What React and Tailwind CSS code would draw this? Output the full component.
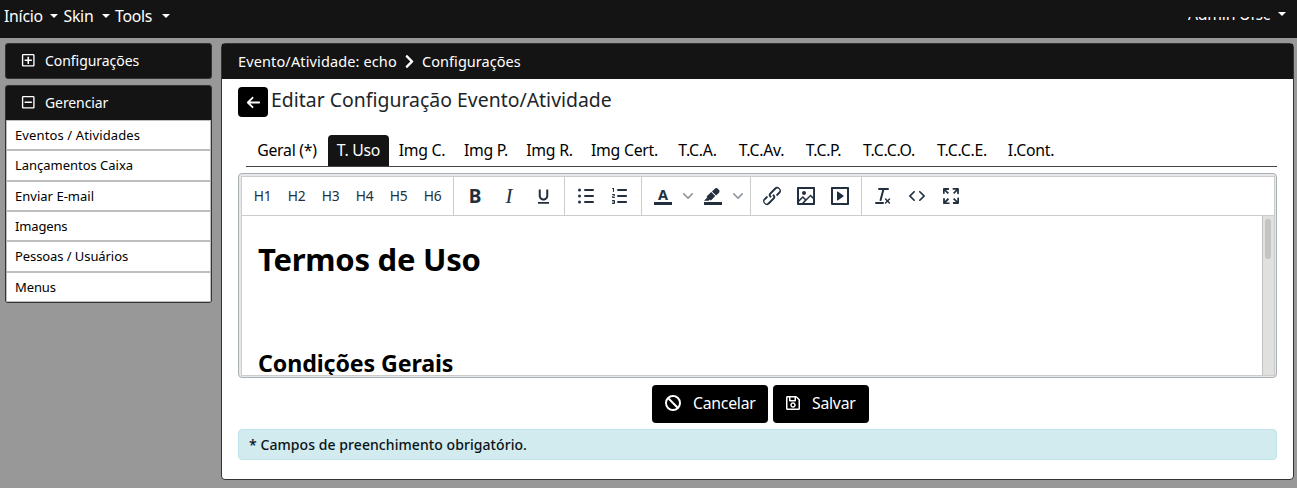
import React from "react";
import { FaRegPlusSquare, FaRegMinusSquare, FaRegSave, FaChevronRight } from "react-icons/fa";
import { FaArrowLeft, FaBan } from "react-icons/fa6";
import { MdFormatUnderlined } from "react-icons/md";

const ICONS = {
  ordered:
    "M10 17h8c.6 0 1 .4 1 1s-.4 1-1 1h-8a1 1 0 010-2zm0-6h8c.6 0 1 .4 1 1s-.4 1-1 1h-8a1 1 0 010-2zm0-6h8c.6 0 1 .4 1 1s-.4 1-1 1h-8a1 1 0 110-2zM6 4v3.5c0 .3-.2.5-.5.5a.5.5 0 01-.5-.5V5h-.5a.5.5 0 010-1H6zm-1 8.8l.2.2h1.3c.3 0 .5.2.5.5s-.2.5-.5.5H4.9a1 1 0 01-.9-1V13c0-.4.3-.8.6-1l1.2-.4.2-.3a.2.2 0 00-.2-.2H4.5a.5.5 0 01-.5-.5c0-.3.2-.5.5-.5h1.6c.5 0 .9.4.9 1v.1c0 .4-.3.8-.6 1l-1.2.4-.2.3zM7 17v2c0 .6-.4 1-1 1H4.5a.5.5 0 010-1h1.2c.2 0 .3-.1.3-.3 0-.2-.1-.3-.3-.3H4.4a.4.4 0 110-.8h1.3c.2 0 .3-.1.3-.3 0-.2-.1-.3-.3-.3H4.5a.5.5 0 110-1H6c.6 0 1 .4 1 1z",
  link: "M6.2 12.3a1 1 0 011.4 1.4l-2.1 2a2 2 0 102.7 2.8l4.8-4.8a1 1 0 000-1.4 1 1 0 111.4-1.3 2.9 2.9 0 010 4L9.6 20a3.9 3.9 0 01-5.5-5.5l2-2zm11.6-.6a1 1 0 01-1.4-1.4l2-2a2 2 0 10-2.6-2.8L11 10.3a1 1 0 000 1.4A1 1 0 119.6 13a2.9 2.9 0 010-4L14.4 4a3.9 3.9 0 015.5 5.5l-2 2z",
  image:
    "M5 15.7l3.3-3.2c.3-.3.7-.3 1 0L12 15l4.1-4c.3-.4.8-.4 1 0l2 1.9V5H5v10.7zM5 18V19h3l2.8-2.9-2-2L5 17.9zm14-3l-2.5-2.4-6.4 6.5H19v-4zM4 3h16c.6 0 1 .4 1 1v16c0 .6-.4 1-1 1H4a1 1 0 01-1-1V4c0-.6.4-1 1-1zm6 8a2 2 0 100-4 2 2 0 000 4z",
  media:
    "M4 3h16c.6 0 1 .4 1 1v16c0 .6-.4 1-1 1H4a1 1 0 01-1-1V4c0-.6.4-1 1-1zm1 2v14h14V5H5zm4.8 2.6l5.6 4a.5.5 0 010 .8l-5.6 4A.5.5 0 019 16V8a.5.5 0 01.8-.4z",
  clear:
    "M13.2 6a1 1 0 010 .2l-2.6 10a1 1 0 01-1 .8h-.2a.8.8 0 01-.8-1l2.6-10H8a1 1 0 110-2h9a1 1 0 010 2h-3.8zM5 18h7a1 1 0 010 2H5a1 1 0 010-2zm13 1.5L16.5 18 15 19.5a.7.7 0 01-1-1l1.5-1.5-1.5-1.5a.7.7 0 011-1l1.5 1.5 1.5-1.5a.7.7 0 011 1L17.5 17l1.5 1.5a.7.7 0 01-1 1z",
  code: "M9.8 15.7c.3.3.3.8 0 1-.3.4-.9.4-1.2 0l-4.4-4.1a.8.8 0 010-1.2l4.4-4.2c.3-.3.9-.3 1.2 0 .3.3.3.8 0 1.1L6 12l3.8 3.7zM14.2 15.7c-.3.3-.3.8 0 1 .4.4.9.4 1.2 0l4.4-4.1c.3-.3.3-.9 0-1.2l-4.4-4.2a.8.8 0 00-1.2 0c-.3.3-.3.8 0 1.1L18 12l-3.8 3.7z",
  full: "M15.3 10l-1.2-1.3 2.9-3h-2.3a.9.9 0 110-1.7H19c.5 0 .9.4.9.9v4.4a.9.9 0 11-1.8 0V7l-2.9 3zm0 4l3 3v-2.3a.9.9 0 111.7 0V19c0 .5-.4.9-.9.9h-4.4a.9.9 0 110-1.8H17l-3-2.9 1.3-1.2zM10 15.4l-2.9 3h2.3a.9.9 0 110 1.7H5a.9.9 0 01-.9-.9v-4.4a.9.9 0 111.8 0V17l2.9-3 1.2 1.3zM8.7 10L5.7 7v2.3a.9.9 0 01-1.7 0V5c0-.5.4-.9.9-.9h4.4a.9.9 0 010 1.8H7l3 2.9-1.3 1.2z",
};

function Icon({ name }) {
  return (
    <svg viewBox="0 0 24 24" className="size-6 fill-[#222f3e]" fillRule="evenodd">
      <path d={ICONS[name]} />
    </svg>
  );
}

function Tool({ children }) {
  return <span className="flex h-[34px] w-[34px] shrink-0 items-center justify-center">{children}</span>;
}

function Group({ className, children }) {
  return <div className={`flex shrink-0 items-center border-[#ccc] ${className}`}>{children}</div>;
}

function Chevron() {
  return (
    <span className="flex w-4 justify-center">
      <svg viewBox="0 0 10 10" className="size-[10px] fill-[#222f3e]/50">
        <path d="M8.7 2.2c.3-.3.8-.3 1 0 .4.4.4.9 0 1.2L5.7 7.8c-.3.3-.9.3-1.2 0L.2 3.4a.8.8 0 010-1.2c.3-.3.8-.3 1.1 0L5 6l3.7-3.8z" />
      </svg>
    </span>
  );
}

function Caret() {
  return <span className="block h-0 w-0 border-x-4 border-t-4 border-x-transparent border-t-white" />;
}

const MENU = [
  ["Início", "w-[59.5px] pr-[5.5px]"],
  ["Skin", "w-[51.5px] pr-[5px]"],
  ["Tools", "w-[55px]"],
];

const LINKS = [
  ["Eventos / Atividades", "tracking-[0.12px]"],
  ["Lançamentos Caixa", "tracking-[-0.02px]"],
  ["Enviar E-mail", "tracking-[0.02px]"],
  ["Imagens", "tracking-[-0.15px]"],
  ["Pessoas / Usuários", "tracking-[-0.08px]"],
  ["Menus", "tracking-[-0.1px]"],
];

const TABS = [
  ["Geral (*)", "w-[82px]"],
  ["T. Uso", "w-[61px] rounded-t bg-[#141414] text-white"],
  ["Img C.", "w-[66px]"],
  ["Img P.", "w-[62px]"],
  ["Img R.", "w-[65px]"],
  ["Img Cert.", "w-[85px]"],
  ["T.C.A.", "w-[61px]"],
  ["T.C.Av.", "w-[67px]"],
  ["T.C.P.", "w-[57px]"],
  ["T.C.C.O.", "w-[74px]"],
  ["T.C.C.E.", "w-[72px]"],
  ["I.Cont.", "w-[66px]"],
];

export default function App() {
  return (
    <div className="flex h-[488px] w-[1297px] flex-col overflow-hidden bg-[#989898] font-['Noto_Sans',sans-serif] text-black">
      <nav className="flex h-[38px] shrink-0 justify-between bg-[#141414] pl-1 text-[15.8px] tracking-[-0.25px] text-white">
        <div className="flex h-8 items-center">
          {MENU.map(([label, cls]) => (
            <div key={label} className={`flex items-center justify-between ${cls}`}>
              <span className="pt-0.5">{label}</span>
              <Caret />
            </div>
          ))}
        </div>
        <div className="flex items-start pr-[11px]">
          <div className="mt-[17px] flex h-1 w-[83px] items-end overflow-hidden">
            <span className="-mb-[5px] whitespace-nowrap leading-6">Admin Ufsc</span>
          </div>
          <span className="ml-[7px] mt-3"><Caret /></span>
        </div>
      </nav>

      <div className="flex items-start pl-[5px] pt-[5px]">
        <aside className="flex w-[207px] shrink-0 flex-col gap-1.5 text-[14px]">
          <div className="flex h-9 items-center rounded-[3px] border border-[#333] bg-[#141414] pb-px pl-[15px] text-white">
            <FaRegPlusSquare className="size-[14.5px]" />
            <span className="ml-[9.5px] tracking-[-0.05px]">Configurações</span>
          </div>
          <div className="rounded-[3px] border border-[#333] bg-[#141414]">
            <div className="flex h-[34px] items-center pb-px pl-[15px] text-white">
              <FaRegMinusSquare className="size-[14.5px]" />
              <span className="ml-[9.5px] tracking-[-0.1px]">Gerenciar</span>
            </div>
            <div className="flex h-[182px] flex-col overflow-hidden rounded-b-[2px] text-[13px]">
              {LINKS.map(([label, cls]) => (
                <a key={label} className={`flex flex-1 items-center border border-[#bdbdbd] bg-white pl-2 pt-px ${cls}`}>
                  {label}
                </a>
              ))}
            </div>
          </div>
        </aside>

        <main className="ml-[9px] flex h-[437px] w-[1073px] shrink-0 flex-col rounded-[4px] border border-[#333] bg-white">
          <div className="flex h-[35px] shrink-0 items-center bg-[#141414] pl-4 text-[14.5px] text-white">
            <span className="w-[164px] whitespace-nowrap tracking-[0.13px]">Evento/Atividade: echo</span>
            <FaChevronRight className="size-[15px]" />
            <span className="ml-[5px] tracking-[0.05px]">Configurações</span>
          </div>

          <div className="flex flex-col pl-4 pr-4">
            <div className="mt-2 flex h-[30px]">
              <span className="flex size-[30px] items-center justify-center rounded bg-black text-white">
                <FaArrowLeft className="size-[15px]" />
              </span>
              <h1 className="ml-[3px] text-[19.4px] leading-[26px] tracking-[0.02px] text-[#212529]">
                Editar Configuração Evento/Atividade
              </h1>
            </div>

            <div className="ml-2 mt-[18px] flex h-8 border-b border-[#444] text-[15.8px] tracking-[-0.25px]">
              {TABS.map(([label, cls]) => (
                <span key={label} className={`flex shrink-0 items-center justify-center whitespace-nowrap pt-px ${cls}`}>
                  {label}
                </span>
              ))}
            </div>

            <div className="mt-1.5 h-[205px] w-[1039px] rounded border border-[#a9b1b5] bg-[#e7e7ea] pb-px pl-[2px] pr-px pt-[2px]">
              <div className="flex h-full flex-col border border-[#ccc] bg-white">
                <div className="flex h-[39px] shrink-0 border-b border-[#ccc] text-[#222f3e]">
                  <Group className="w-[212px] border-r pl-[3.5px] text-[13.8px] tracking-[-0.4px]">
                    {["H1", "H2", "H3", "H4", "H5", "H6"].map((h) => (
                      <Tool key={h}>{h}</Tool>
                    ))}
                  </Group>
                  <Group className="w-[111px] border-r pl-1">
                    <Tool><span className="text-[19px] font-bold leading-none">B</span></Tool>
                    <Tool><span className="font-['Liberation_Serif',serif] text-[21px] italic leading-none">I</span></Tool>
                    <Tool><MdFormatUnderlined className="size-[19px]" /></Tool>
                  </Group>
                  <Group className="w-[77px] border-r pl-1">
                    <Tool>
                      <svg viewBox="0 0 24 24" className="size-6 fill-[#222f3e]">
                        <circle cx="5.5" cy="6" r="1.5" />
                        <circle cx="5.5" cy="12" r="1.5" />
                        <circle cx="5.5" cy="18" r="1.5" />
                        <rect x="10" y="5" width="10" height="2" rx="1" />
                        <rect x="10" y="11" width="10" height="2" rx="1" />
                        <rect x="10" y="17" width="10" height="2" rx="1" />
                      </svg>
                    </Tool>
                    <Tool><Icon name="ordered" /></Tool>
                  </Group>
                  <Group className="w-[109px] border-r pl-1">
                    <Tool>
                      <span className="flex h-[18px] w-[18px] flex-col items-center justify-end border-b-[3px] border-[#222f3e] text-[14.5px] font-bold leading-[15px]">
                        A
                      </span>
                    </Tool>
                    <Chevron />
                    <Tool>
                      <svg viewBox="0 0 24 24" className="size-6 fill-[#222f3e]">
                        <rect x="3" y="18" width="18" height="3" />
                        <path d="M7.7 16.7H3l3.3-3.3-.7-.8L10.2 8l4 4.1-4 4.2c-.2.2-.6.2-.8 0l-.6-.7-1.1 1.1zm5-7.5L11 7.4l3-2.9a2 2 0 012.6 0L18 6c.7.7.7 2 0 2.7l-2.9 2.9-1.8-1.8-.5-.6" />
                      </svg>
                    </Tool>
                    <Chevron />
                  </Group>
                  <Group className="w-[111px] border-r pl-1">
                    <Tool><Icon name="link" /></Tool>
                    <Tool><Icon name="image" /></Tool>
                    <Tool><Icon name="media" /></Tool>
                  </Group>
                  <Group className="pl-1">
                    <Tool><Icon name="clear" /></Tool>
                    <Tool><Icon name="code" /></Tool>
                    <Tool><Icon name="full" /></Tool>
                  </Group>
                </div>
                <div className="flex min-h-0 flex-1 overflow-hidden">
                  <div className="flex-1 overflow-hidden pl-4">
                    <h1 className="mt-[21px] text-[31px] font-bold leading-[44px] tracking-[-0.25px]">Termos de Uso</h1>
                    <h2 className="mt-[66px] text-[23.2px] font-bold leading-8 tracking-[-0.1px]">Condições Gerais</h2>
                  </div>
                  <div className="w-[12px] border-l border-[#c0c2bd] bg-[#e0e0de] pl-[2px] pt-[3px]">
                    <div className="h-10 w-1.5 rounded-full bg-[#c3c4c3]" />
                  </div>
                </div>
              </div>
            </div>

            <div className="ml-[414px] mt-[7px] flex gap-[5px] text-[15.8px] tracking-[-0.25px] text-white">
              <button className="flex h-[38px] w-[116px] items-center rounded bg-black pb-0.5 pl-[13px]">
                <FaBan className="size-4" />
                <span className="ml-3 pt-0.5">Cancelar</span>
              </button>
              <button className="flex h-[38px] w-24 items-center rounded bg-black pb-0.5 pl-3">
                <FaRegSave className="size-4" />
                <span className="ml-[11px] pt-0.5">Salvar</span>
              </button>
            </div>

            <div className="mt-1.5 flex h-[31px] w-[1039px] items-center rounded border border-[#bee5eb] bg-[#d1ebef] pl-[10px] text-[14px] font-medium tracking-[0.07px] text-[#0b1216]">
              * Campos de preenchimento obrigatório.
            </div>
          </div>
        </main>
      </div>
    </div>
  );
}
